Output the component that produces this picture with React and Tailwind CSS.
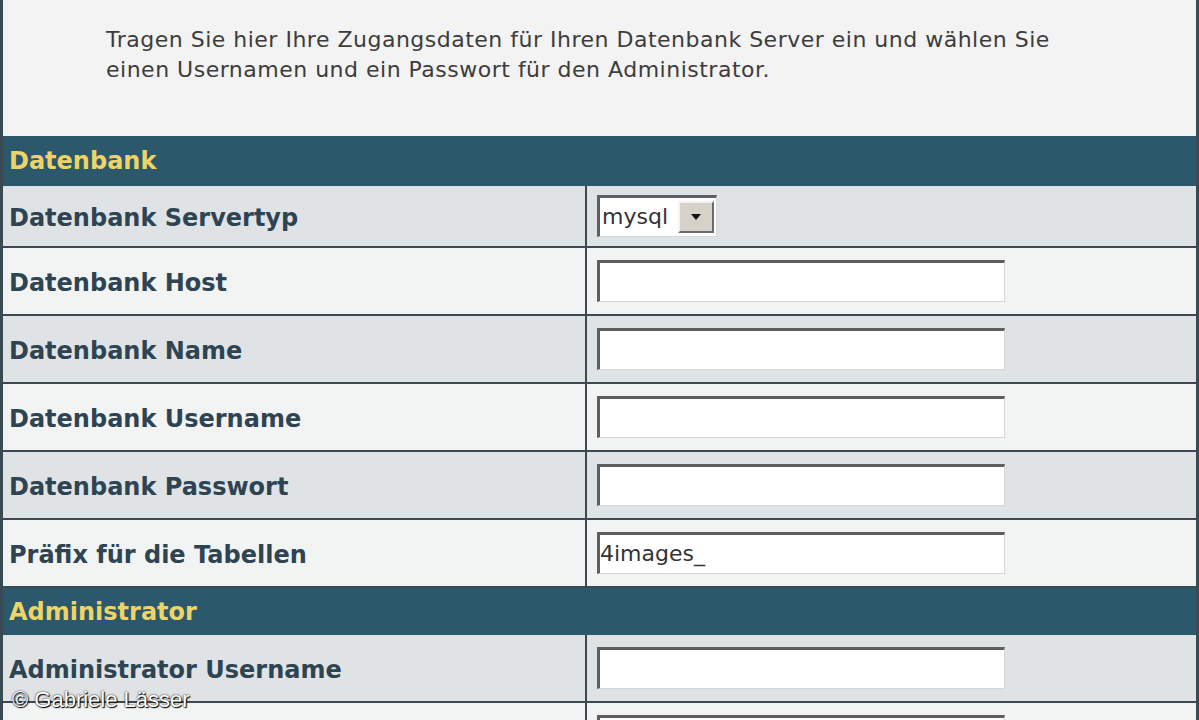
const rows1 = [
  { label: 'Datenbank Servertyp', type: 'select', h: 'h-[62px]' },
  { label: 'Datenbank Host' },
  { label: 'Datenbank Name' },
  { label: 'Datenbank Username' },
  { label: 'Datenbank Passwort' },
  { label: 'Präfix für die Tabellen', value: '4images_' },
];

const rows2 = [
  { label: 'Administrator Username' },
  { label: 'Administrator Passwort' },
];

function Field({ value }) {
  return (
    <div className="w-[408px] h-[42px] bg-white border-t-[3px] border-l-[3px] border-r border-b border-t-[#5e5e5e] border-l-[#5e5e5e] border-r-[#d6d6d6] border-b-[#d6d6d6] flex items-center text-[22px] text-[#333] leading-none">
      {value}
    </div>
  );
}

function SelectBox() {
  return (
    <div className="w-[120px] h-[42px] bg-white border-t-[3px] border-l-[3px] border-r border-b border-t-[#5e5e5e] border-l-[#5e5e5e] border-r-[#d6d6d6] border-b-[#d6d6d6] flex items-center justify-between">
      <span className="text-[22px] text-[#333] leading-none pl-[2px]">mysql</span>
      <div className="w-[36px] h-[32px] mr-[2px] bg-[#d6d2ca] border-2 border-t-[#f4f4f4] border-l-[#f4f4f4] border-r-[#6a6a6a] border-b-[#6a6a6a] flex items-center justify-center">
        <svg width="10" height="6" viewBox="0 0 10 6"><path d="M0 0h10L5 6z" fill="#111" /></svg>
      </div>
    </div>
  );
}

function Row({ row, i }) {
  const dark = i % 2 === 0;
  return (
    <div className={`flex border-b-2 border-[#3a4a52] ${row.h || 'h-[68px]'} ${dark ? 'bg-[#e0e3e5]' : 'bg-[#f2f3f3]'}`}>
      <div className="w-[584px] shrink-0 flex items-center pl-[6px] pt-[3px] border-r-2 border-[#3a4a52] text-[24px] font-bold text-[#2e4452]">
        {row.label}
      </div>
      <div className="flex-1 flex items-center pl-[10px]">
        {row.type === 'select' ? <SelectBox /> : <Field value={row.value} />}
      </div>
    </div>
  );
}

function Header({ title, h }) {
  return (
    <div className={`${h} bg-[#2b586b] flex items-center pl-[6px] text-[24px] font-bold text-[#eed466]`}>
      {title}
    </div>
  );
}

export default function App() {
  return (
    <div className="relative w-[1199px] h-[720px] overflow-hidden bg-[#f2f3f3] font-['DejaVu_Sans',sans-serif]">
      <div className="border-l-[3px] border-r-[3px] border-[#3a4a52]">
        <div className="h-[136px] bg-[#f3f3f3] pl-[103px] pt-[25px] text-[22px] leading-[30px] tracking-[0.5px] text-[#3c3c3c]">
          <p>Tragen Sie hier Ihre Zugangsdaten für Ihren Datenbank Server ein und wählen Sie</p>
          <p>einen Usernamen und ein Passwort für den Administrator.</p>
        </div>
        <Header title="Datenbank" h="h-[50px]" />
        {rows1.map((r, i) => <Row key={r.label} row={r} i={i} />)}
        <Header title="Administrator" h="h-[47px]" />
        {rows2.map((r, i) => <Row key={r.label} row={r} i={i} />)}
      </div>
      <div className="absolute left-[12px] top-[683px] text-[22px] text-white font-['Liberation_Sans',sans-serif] [text-shadow:0_0_2px_#000,1px_1px_1px_#000]">
        © Gabriele Lässer
      </div>
    </div>
  );
}
